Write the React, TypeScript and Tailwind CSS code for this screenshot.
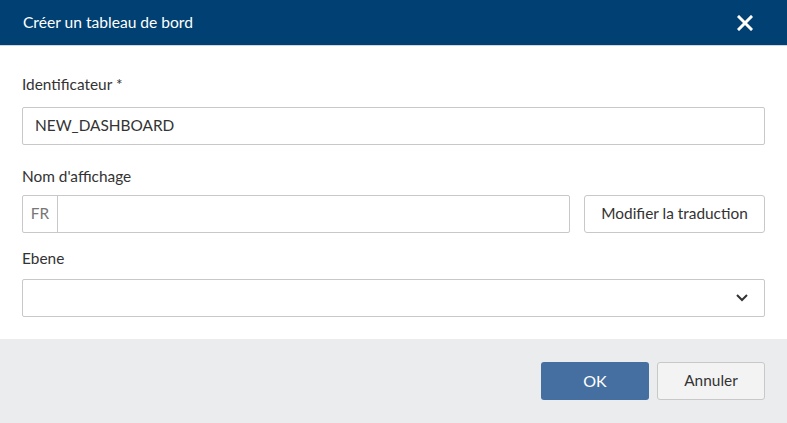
import React from "react";

export default function App() {
  return (
    <div className="w-[787px] h-[423px] flex flex-col bg-white text-[#333] text-[15.4px]" style={{ fontFamily: "Lato, 'Liberation Sans', sans-serif" }}>
      <div className="h-[46px] bg-[#004072] flex items-center justify-between pl-[23px] pr-[34px] border-b border-[#d0d7de]">
        <span className="text-white text-[15.6px]">Créer un tableau de bord</span>
        <svg width="16" height="16" viewBox="0 0 16 16">
          <path d="M2 2 L14 14 M14 2 L2 14" stroke="white" strokeWidth="3" strokeLinecap="square" />
        </svg>
      </div>
      <div className="flex-1 flex flex-col px-[22px] pt-[29px]">
        <div className="h-[20px] flex items-center">Identificateur *</div>
        <div className="mt-[12px] h-[38px] border border-[#c8c8c8] rounded-[2px] flex items-center px-[12px]">NEW_DASHBOARD</div>
        <div className="mt-[22px] h-[20px] flex items-center">Nom d'affichage</div>
        <div className="mt-[8px] flex gap-[14px]">
          <div className="flex-1 h-[38px] border border-[#c8c8c8] rounded-[2px] flex">
            <div className="w-[35px] border-r border-[#c8c8c8] flex items-center justify-center text-[#777]">FR</div>
            <div className="flex-1" />
          </div>
          <div className="w-[181px] h-[38px] border border-[#c8c8c8] rounded-[3px] flex items-center justify-center">Modifier la traduction</div>
        </div>
        <div className="mt-[16px] h-[20px] flex items-center">Ebene</div>
        <div className="mt-[10px] h-[38px] border border-[#c8c8c8] rounded-[2px] flex items-center justify-end pr-[16px]">
          <svg width="12" height="8" viewBox="0 0 12 8">
            <path d="M1 1 L6 6 L11 1" stroke="#333" strokeWidth="2" fill="none" />
          </svg>
        </div>
      </div>
      <div className="h-[84px] bg-[#ebecee] flex items-center justify-end gap-[8px] pr-[22px]">
        <div className="w-[108px] h-[38px] bg-[#456fa0] rounded-[3px] flex items-center justify-center text-white text-[16px]">OK</div>
        <div className="w-[108px] h-[38px] border border-[#c8c8c8] bg-[#f3f3f4] rounded-[3px] flex items-center justify-center">Annuler</div>
      </div>
    </div>
  );
}
